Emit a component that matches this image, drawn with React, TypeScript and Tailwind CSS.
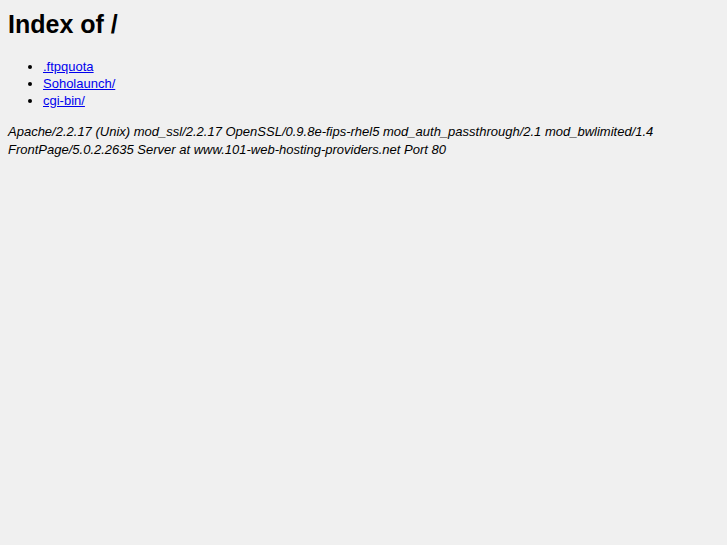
export default function App() {
  return (
    <div className="min-h-[545px] bg-[#f0f0f0] p-2 text-black" style={{ fontFamily: '"Liberation Sans", Arial, sans-serif' }}>
      <h1 className="text-[25px] font-bold leading-[28px] mt-[2px]">Index of /</h1>
      <ul className="list-disc pl-[35px] mt-[20px] text-[13px] leading-[17px]">
        <li><a href="#" className="text-[#0000ee] underline">.ftpquota</a></li>
        <li><a href="#" className="text-[#0000ee] underline">Soholaunch/</a></li>
        <li><a href="#" className="text-[#0000ee] underline">cgi-bin/</a></li>
      </ul>
      <address className="italic text-[13px] leading-[18px] mt-[14px]">
        Apache/2.2.17 (Unix) mod_ssl/2.2.17 OpenSSL/0.9.8e-fips-rhel5 mod_auth_passthrough/2.1 mod_bwlimited/1.4 FrontPage/5.0.2.2635 Server at www.101-web-hosting-providers.net Port 80
      </address>
    </div>
  );
}
